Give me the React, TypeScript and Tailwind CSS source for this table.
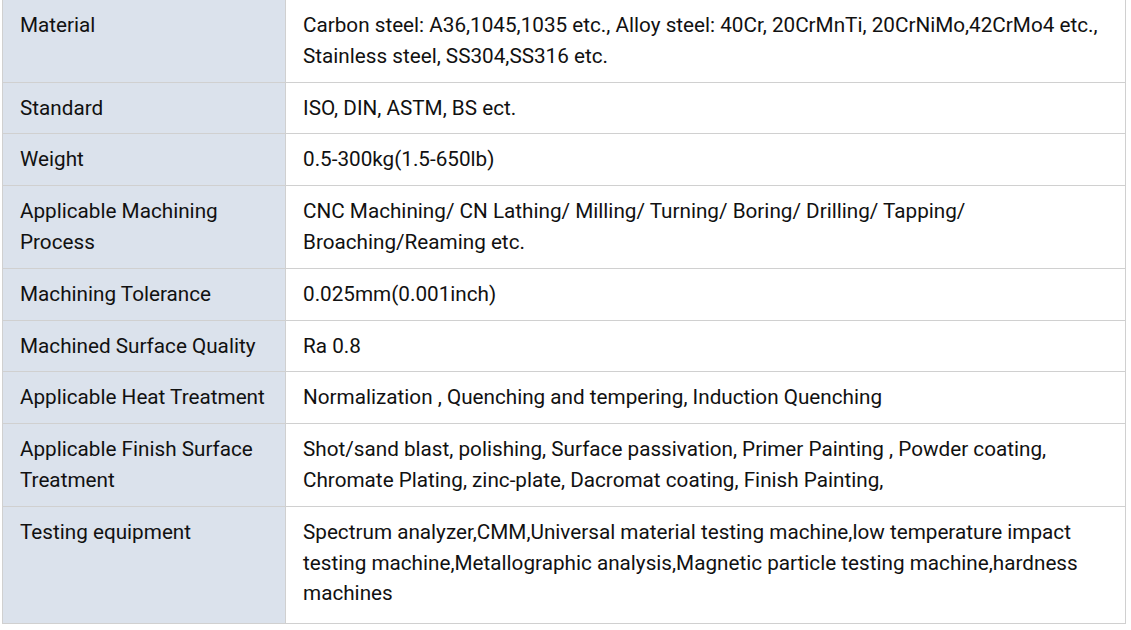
const rows: [string, string][] = [
  [
    'Material',
    'Carbon steel: A36,1045,1035 etc., Alloy steel: 40Cr, 20CrMnTi, 20CrNiMo,42CrMo4 etc., Stainless steel, SS304,SS316 etc.',
  ],
  ['Standard', 'ISO, DIN, ASTM, BS ect.'],
  ['Weight', '0.5-300kg(1.5-650lb)'],
  [
    'Applicable Machining Process',
    'CNC Machining/ CN Lathing/ Milling/ Turning/ Boring/ Drilling/ Tapping/ Broaching/Reaming etc.',
  ],
  ['Machining Tolerance', '0.025mm(0.001inch)'],
  ['Machined Surface Quality', 'Ra 0.8'],
  ['Applicable Heat Treatment', 'Normalization , Quenching and tempering, Induction Quenching'],
  [
    'Applicable Finish Surface Treatment',
    'Shot/sand blast, polishing, Surface passivation, Primer Painting , Powder coating, Chromate Plating, zinc-plate, Dacromat coating, Finish Painting,',
  ],
  [
    'Testing equipment',
    'Spectrum analyzer,CMM,Universal material testing machine,low temperature impact testing machine,Metallographic analysis,Magnetic particle testing machine,hardness machines',
  ],
];

const App = () => {
  return (
    <div className="bg-white w-[1131px] h-[630px] overflow-hidden font-['Roboto',sans-serif] text-[20.7px] leading-[30.8px] text-[#111]">
      <div className="pl-[2px] w-[1126px] -mt-px">
        <table className="w-full border-collapse table-fixed">
          <colgroup>
            <col className="w-[283px]" />
            <col />
          </colgroup>
          <tbody>
            {rows.map(([label, value], i) => (
              <tr key={label}>
                <td
                  className={`align-top border border-[#d0d0d0] bg-[#dbe2ec] pl-[17px] pr-[8px] pt-[10px] ${
                    i === rows.length - 1 ? 'pb-[14px]' : 'pb-[10px]'
                  }`}>
                  {label}
                </td>
                <td
                  className={`align-top border border-[#d0d0d0] pl-[17px] pr-[16px] pt-[10px] ${
                    i === rows.length - 1 ? 'pb-[14px]' : 'pb-[10px]'
                  }`}>
                  {value}
                </td>
              </tr>
            ))}
          </tbody>
        </table>
      </div>
    </div>
  );
};

export default App;
